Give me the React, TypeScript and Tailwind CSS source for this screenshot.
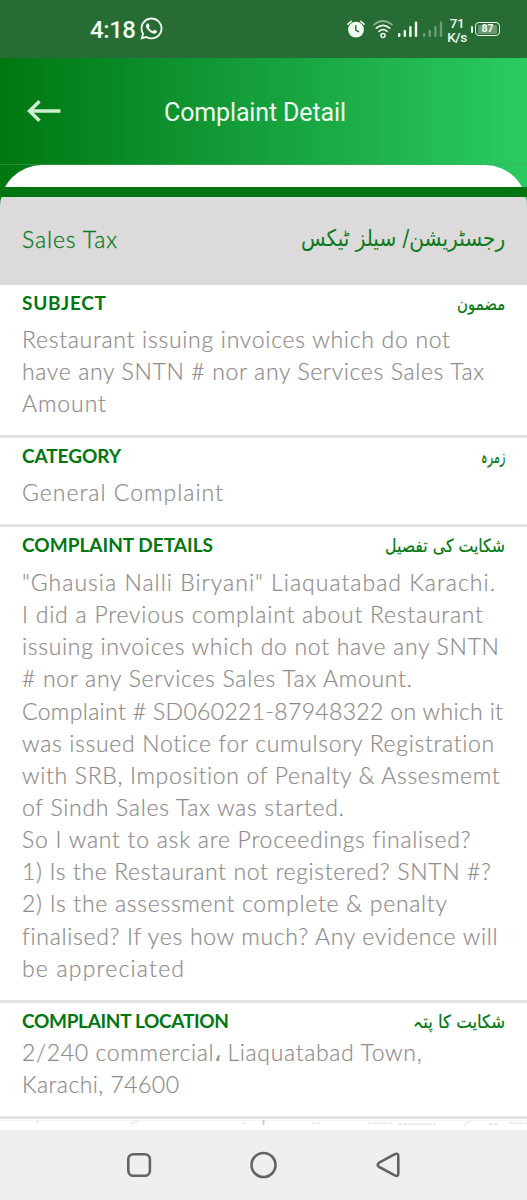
import { useLayoutEffect, useRef } from "react"
import { FaWhatsapp } from "react-icons/fa"

interface FitProps {
  text: string
  width: number
  className?: string
}

interface Section {
  title: string
  titleWidth: number
  urdu: string
  urduWidth: number
  box: string
  body: string
  lines: [string, number][]
}

const sections: Section[] = [
  {
    title: "SUBJECT",
    titleWidth: 84,
    urdu: "مضمون",
    urduWidth: 48,
    box: "h-[153px]",
    body: "mt-[6px]",
    lines: [
      ["Restaurant issuing invoices which do not", 428],
      ["have any SNTN # nor any Services Sales Tax", 462],
      ["Amount", 84],
    ],
  },
  {
    title: "CATEGORY",
    titleWidth: 99,
    urdu: "زمرہ",
    urduWidth: 24,
    box: "h-[89px]",
    body: "mt-[6px]",
    lines: [["General Complaint", 201]],
  },
  {
    title: "COMPLAINT DETAILS",
    titleWidth: 191,
    urdu: "شکایت کی تفصیل",
    urduWidth: 120,
    box: "h-[476px]",
    body: "mt-[7px]",
    lines: [
      ['"Ghausia Nalli Biryani" Liaquatabad Karachi.', 473],
      ["I did a Previous complaint about Restaurant", 461],
      ["issuing invoices which do not have any SNTN", 477],
      ["# nor any Services Sales Tax Amount.", 390],
      ["Complaint # SD060221-87948322 on which it", 481],
      ["was issued Notice for cumulsory Registration", 473],
      ["with SRB, Imposition of Penalty & Assesmemt", 478],
      ["of Sindh Sales Tax was started.", 322],
      ["So I want to ask are Proceedings finalised?", 448],
      ["1) Is the Restaurant not registered? SNTN #?", 469],
      ["2) Is the assessment complete & penalty", 425],
      ["finalised? If yes how much? Any evidence will", 475],
      ["be appreciated", 162],
    ],
  },
  {
    title: "COMPLAINT LOCATION",
    titleWidth: 207,
    urdu: "شکایت کا پتہ",
    urduWidth: 92,
    box: "h-[116px]",
    body: "mt-[1px]",
    lines: [
      ["2/240 commercial، Liaquatabad Town,", 401],
      ["Karachi, 74600", 157],
    ],
  },
]

// spreads the letters so the line fills the given width
const FitText = ({ text, width, className }: FitProps) => {
  const ref = useRef<HTMLSpanElement>(null)

  useLayoutEffect(() => {
    const el = ref.current
    if (!el) return
    el.style.letterSpacing = "0px"
    const natural = el.getBoundingClientRect().width
    el.style.letterSpacing = `${(width - natural) / (text.length - 1)}px`
  }, [text, width])

  return <span ref={ref} className={`inline-block whitespace-pre ${className ?? ""}`}>{text}</span>
}

// joined script can't take letter spacing, so it is scaled instead
const UrduText = ({ text, width, className }: FitProps) => {
  const ref = useRef<HTMLSpanElement>(null)

  useLayoutEffect(() => {
    const el = ref.current
    if (!el) return
    el.style.transform = `scaleX(${width / el.offsetWidth})`
  }, [text, width])

  return (
    <span
      ref={ref}
      dir="rtl"
      lang="ur"
      className={`inline-block origin-right whitespace-nowrap font-['DejaVu_Sans',sans-serif] ${className ?? ""}`}
    >
      {text}
    </span>
  )
}

const Signal = ({ className }: { className: string }) => (
  <svg width="20" height="16" viewBox="0 0 20 16" className={className} fill="currentColor">
    <rect x="0" y="12" width="2.4" height="4" rx="1" />
    <rect x="5.6" y="9" width="2.4" height="7" rx="1" />
    <rect x="11.2" y="5" width="2.4" height="11" rx="1" />
    <rect x="16.8" y="0.5" width="2.4" height="15.5" rx="1" />
  </svg>
)

const StatusBar = () => (
  <div className="flex h-[58px] items-start bg-[#266c34] text-[#f1fbf1] font-[Roboto,sans-serif]">
    <FitText text="4:18" width={46} className="ml-[90px] mt-[16px] text-[24px] leading-[28px] font-medium" />
    <FaWhatsapp className="ml-[3px] mt-[16px] size-[25px]" />
    <div className="ml-auto flex items-start">
      <svg width="18" height="18" viewBox="0 0 18 18" className="mt-[20px]" fill="none" stroke="currentColor">
        <circle cx="9" cy="9.6" r="7.9" fill="currentColor" stroke="none" />
        <path d="M1 4.2 4.2 1.4M17 4.2 13.8 1.4" strokeWidth="1.6" strokeLinecap="round" />
        <path d="M8.8 5.2V10l3.2 1.8" stroke="#266c34" strokeWidth="1.4" />
      </svg>
      <svg width="20" height="19" viewBox="0 0 20 19" className="ml-[8px] mt-[20px]" fill="none" stroke="currentColor" strokeWidth="1.7" strokeLinecap="round">
        <path d="M1 4.6Q10-2.6 19 4.6" opacity=".5" />
        <path d="M3.3 8.1Q10 2.5 16.7 8.1M6 11.4Q10 8 14 11.4" />
        <circle cx="10" cy="15.5" r="2" strokeWidth="1.6" />
      </svg>
      <Signal className="ml-[5px] mt-[21px]" />
      <Signal className="ml-[5px] mt-[21px] opacity-35" />
      <div className="ml-[3px] mt-[16px] w-[22px] text-center text-[13.5px] leading-[14px] tracking-[-0.4px] font-medium">
        <div>71</div>
        <div>K/s</div>
      </div>
      <div className="ml-[3px] mr-[27px] mt-[22px] flex items-center">
        <div className="mr-[2px] h-[7px] w-[2px] rounded-full bg-current" />
        <div className="flex h-[14px] w-[25px] items-center justify-center rounded-[4px] border-[1.5px] border-current">
          <div className="flex h-[9px] w-[19px] items-center justify-center rounded-[1px] bg-[#6b9873] text-[10.5px] leading-none font-bold">87</div>
        </div>
      </div>
    </div>
  </div>
)

const Header = () => (
  <header className="flex h-[106px] items-start">
    <svg width="34" height="22" viewBox="0 0 34 22" className="ml-[27px] mt-[42px] text-[#d0efd0]" fill="none" stroke="currentColor" strokeWidth="3.4">
      <path d="M33.5 11H3M12.5 1.2 2.5 11l10 9.8" />
    </svg>
    <FitText text="Complaint Detail" width={182} className="ml-[103px] mt-[39px] text-[25px] leading-[32px] text-[#effcef] font-[Roboto,sans-serif]" />
  </header>
)

const NavBar = () => (
  <nav className="h-[70px] bg-[#efefef]">
    <svg width="527" height="70" viewBox="0 0 527 70" fill="none" stroke="#636363" strokeWidth="2.6" strokeLinejoin="round">
      <rect x="128.3" y="24.3" width="21.6" height="21.4" rx="5" />
      <circle cx="263.5" cy="35" r="12" />
      <path d="M379.2 32.7 394.8 24.2Q398.3 22.7 398.3 26.2V43.4Q398.3 46.9 394.8 45.4L379.2 37Q376.2 35 379.2 32.7Z" />
    </svg>
  </nav>
)

export default function App() {
  return (
    <div className="flex h-[1200px] w-[527px] flex-col overflow-hidden bg-white">
      <StatusBar />
      <div className="bg-linear-to-r from-[#00770f] to-[#2acb62]">
        <Header />
        <div className="h-[23px] overflow-hidden border-t border-[#4da35c]/50">
          <div className="h-[60px] rounded-t-[42px] bg-white" />
        </div>
        <div className="h-[10px] bg-[#017610]" />
        <div className="flex h-[88px] items-center justify-between rounded-t-[2px_10px] bg-[#dcdadb] px-[22px] text-[#0b7a1d]">
          <FitText text="Sales Tax" width={95} className="-mt-[3px] text-[23px] font-light [-webkit-text-stroke:0.3px] font-[Lato,sans-serif]" />
          <UrduText text="رجسٹریشن/ سیلز ٹیکس" width={204} className="-mt-[5px] text-[23px]" />
        </div>
      </div>
      <main className="flex-1 overflow-hidden">
        {sections.map((section) => (
          <section key={section.title} className={`border-b-[3px] border-[#e3e3e3] px-[22px] pt-[4px] ${section.box}`}>
            <div className="flex h-[28px] items-center justify-between text-[#02770f]">
              <FitText text={section.title} width={section.titleWidth} className="text-[19px] leading-[28px] font-bold font-[Lato,sans-serif]" />
              <UrduText text={section.urdu} width={section.urduWidth} className="mt-[2px] text-[18px] leading-[28px] [-webkit-text-stroke:0.2px]" />
            </div>
            <div className={`text-[23px] leading-[32.15px] font-light text-[#8f8b8d] [-webkit-text-stroke:0.2px] font-[Lato,sans-serif] ${section.body}`}>
              {section.lines.map(([line, width]) => (
                <div key={line} className="h-[32.15px]">
                  <FitText text={line} width={width} />
                </div>
              ))}
            </div>
          </section>
        ))}
        {/* top edge of the location map */}
        <svg width="527" height="11" viewBox="0 0 527 11" fill="none" stroke="#ececec">
          <path d="M0 1.5H527" stroke="#f4f4f4" />
          <path d="M130 5l8-3M464 6l7-4" strokeWidth="1.5" />
          <path d="M263.5 1v5" strokeWidth="2" stroke="#cfcfcf" />
          <path d="M36 3h3M243 4h3M312 4h8M368 4h24M398 5h38M489 5h9M509 4h18" strokeWidth="2" strokeDasharray="4 1" />
        </svg>
      </main>
      <NavBar />
    </div>
  )
}
